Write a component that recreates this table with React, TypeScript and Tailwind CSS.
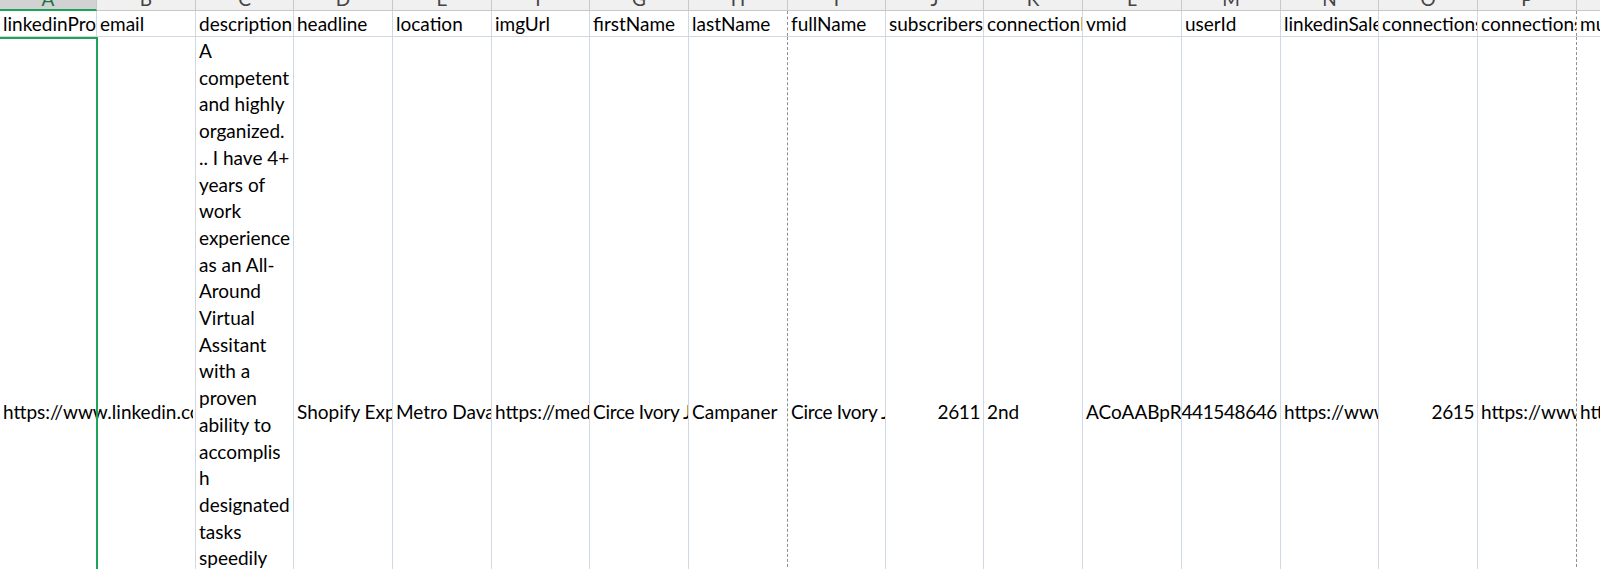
type Col = {
  letter: string;
  w: string;
  head: string;
  val?: string;
  right?: boolean;
  dashed?: boolean;
};

const cols: Col[] = [
  { letter: "A", w: "w-[97px]", head: "linkedinProfileUrl" },
  { letter: "B", w: "w-[99px]", head: "email" },
  { letter: "C", w: "w-[98px]", head: "description" },
  { letter: "D", w: "w-[99px]", head: "headline", val: "Shopify Expert" },
  { letter: "E", w: "w-[99px]", head: "location", val: "Metro Davao" },
  { letter: "F", w: "w-[98px]", head: "imgUrl", val: "https://media.licdn.com" },
  { letter: "G", w: "w-[99px]", head: "firstName", val: "Circe Ivory Jane" },
  { letter: "H", w: "w-[99px]", head: "lastName", val: "Campaner", dashed: true },
  { letter: "I", w: "w-[98px]", head: "fullName", val: "Circe Ivory Jane Campaner" },
  { letter: "J", w: "w-[98px]", head: "subscribers", val: "2611", right: true },
  { letter: "K", w: "w-[99px]", head: "connectionDegree", val: "2nd" },
  { letter: "L", w: "w-[99px]", head: "vmid", val: "ACoAABpRfXkB" },
  { letter: "M", w: "w-[99px]", head: "userId", val: "441548646", right: true },
  { letter: "N", w: "w-[98px]", head: "linkedinSalesNavUrl", val: "https://www.linkedin.com/sales" },
  { letter: "O", w: "w-[99px]", head: "connectionsCount", val: "2615", right: true },
  { letter: "P", w: "w-[99px]", head: "connectionsUrl", val: "https://www.linkedin.com/search", dashed: true },
  { letter: "Q", w: "w-[80px]", head: "mutualConnectionsText", val: "https://www.linkedin.com/search" },
];

// wrapped cell C2, line breaks as Excel shows them
const description = [
  "A",
  "competent",
  "and highly",
  "organized.",
  ".. I have 4+",
  "years of",
  "work",
  "experience",
  "as an All-",
  "Around",
  "Virtual",
  "Assitant",
  "with a",
  "proven",
  "ability to",
  "accomplis",
  "h",
  "designated",
  "tasks",
  "speedily",
];

function gridLine(c: Col) {
  return c.dashed ? "border-r border-dashed border-r-[#8f8f8f]" : "border-r border-r-[#d0d7e5]";
}

export default function App() {
  return (
    <div className="h-[569px] w-[1600px] overflow-hidden bg-white flex flex-col font-['Lato','Liberation_Sans',sans-serif] text-[19px] text-black">
      {/* column letters, mostly scrolled out of view */}
      <div className="flex h-[11px] shrink-0">
        {cols.map((c) => (
          <div
            key={c.letter}
            className={`${c.w} shrink-0 h-full overflow-hidden flex justify-center border-r border-r-[#c8c8c8] ${
              c.letter === "A"
                ? "bg-[#d2d2d2] text-[#217346] border-b-2 border-b-[#1fa25a]"
                : "bg-[#f0f0f0] text-[#444] border-b border-b-[#c8c8c8]"
            }`}
          >
            <div className="leading-[19px] -mt-[11px]">{c.letter}</div>
          </div>
        ))}
      </div>

      {/* row 1: field names */}
      <div className="flex h-[26px] shrink-0 border-b border-b-[#d0d7e5]">
        {cols.map((c) => (
          <div
            key={c.letter}
            className={`${c.w} shrink-0 h-full overflow-hidden whitespace-nowrap pl-[3px] leading-[26px] ${gridLine(c)}`}
          >
            {c.head}
          </div>
        ))}
      </div>

      {/* row 2: the record */}
      <div className="relative flex flex-1">
        {cols.map((c) => {
          if (c.letter === "A") {
            return (
              <div key="A" className={`${c.w} shrink-0 relative z-10 ${gridLine(c)}`}>
                <div className="w-[193px] pl-[3px] pt-[362px] leading-[26px] overflow-hidden whitespace-nowrap">
                  https://www.linkedin.com/in/circe-ivory
                </div>
              </div>
            );
          }
          if (c.letter === "B") {
            return <div key="B" className={`${c.w} shrink-0 ${gridLine(c)}`} />;
          }
          if (c.letter === "C") {
            return (
              <div key="C" className={`${c.w} shrink-0 overflow-hidden pl-[3px] pt-[1px] ${gridLine(c)}`}>
                {description.map((line, i) => (
                  <div key={i} className="leading-[26.7px] whitespace-nowrap">
                    {line}
                  </div>
                ))}
              </div>
            );
          }
          return (
            <div
              key={c.letter}
              className={`${c.w} shrink-0 overflow-hidden ${gridLine(c)} pt-[362px] ${
                c.right ? "pr-[3px] text-right" : "pl-[3px]"
              }`}
            >
              <div
                className={`leading-[26px] whitespace-nowrap ${
                  c.right ? "flex justify-end tracking-[-0.4px]" : ""
                } ${c.letter === "I" || c.letter === "G" ? "tracking-[-0.3px]" : ""}`}
              >
                {c.val}
              </div>
            </div>
          );
        })}

        {/* active cell A2 */}
        <div className="absolute left-[-3px] top-0 w-[101px] h-[600px] border-2 border-[#1fa25a] z-20 pointer-events-none" />
      </div>
    </div>
  );
}
